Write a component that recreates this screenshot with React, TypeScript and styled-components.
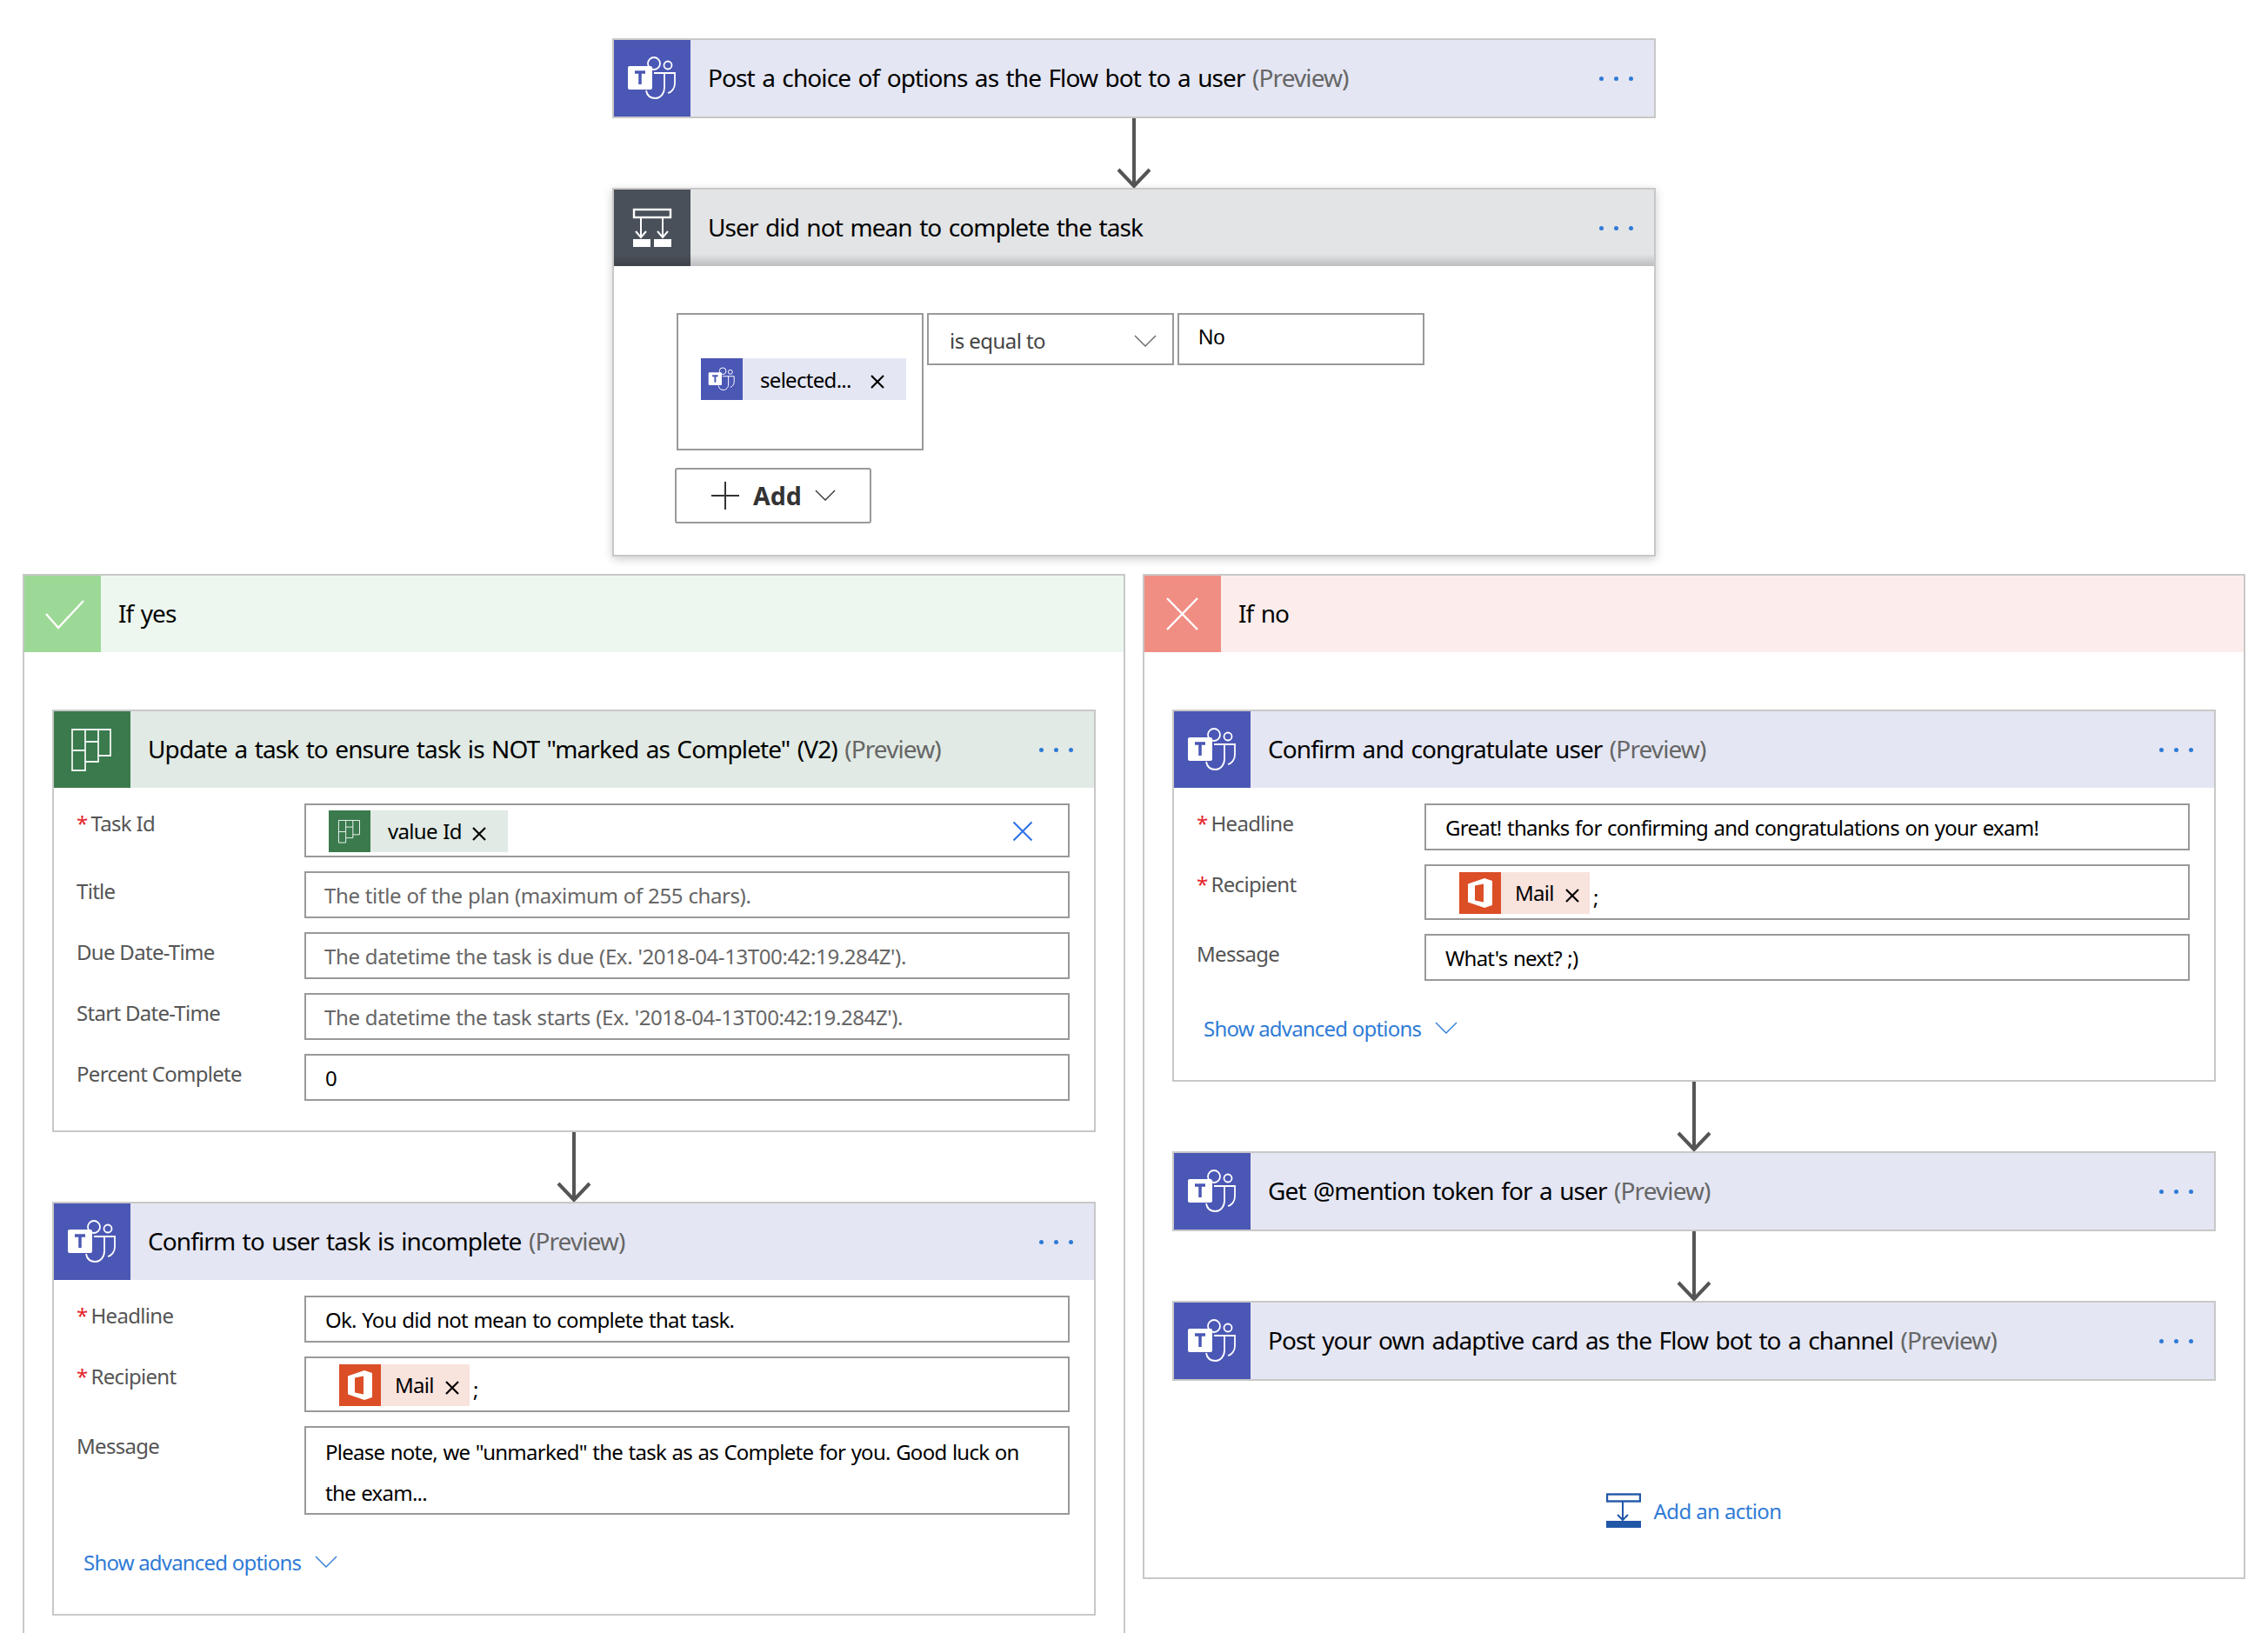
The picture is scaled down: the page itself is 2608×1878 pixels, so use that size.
import React from "react";
import styled, { createGlobalStyle } from "styled-components";

const GlobalStyle = createGlobalStyle`
  html, body {
    margin: 0;
    background: #fff;
    font-family: "Noto Sans", "Open Sans", sans-serif;
  }
`;

const palette = {
  teams: { tile: "#4b57b5", head: "#e4e6f3" },
  condition: { tile: "#4a5059", head: "#e3e4e6" },
  planner: { tile: "#3a7a4d", head: "#e1eae4" },
  office: { tile: "#dc4e26", head: "#f9e3dd" },
  yes: { tile: "#9dd996", head: "#edf7ef" },
  no: { tile: "#f08e84", head: "#fcedec" },
};
type Kind = keyof typeof palette;

/* ---------- icons ---------- */

const TeamsIcon = ({ size }: { size: number }) => (
  <svg width={size} height={size} viewBox="0 0 88 88" fill="none" stroke="#fff" strokeWidth="1.8">
    <circle cx="46" cy="27" r="7" />
    <circle cx="62" cy="29" r="4.5" />
    <path d="M46 38h24v12c0 6-4 10-8 11" />
    <path d="M58 38v17c0 7-5 12-10 12-6 0-10-3-11-9" />
    <rect x="16" y="30" width="28" height="27" rx="2" fill="#fff" stroke="none" />
    <path d="M24 37h12M30 37v14" stroke="#4b57b5" strokeWidth="3.5" />
  </svg>
);

const ConditionIcon = () => (
  <svg width="88" height="88" viewBox="0 0 88 88" fill="none" stroke="#fff" strokeWidth="2">
    <rect x="23" y="23" width="42" height="9" strokeWidth="2.4" />
    <path d="M31 32v23M25 48l6 7 6-7M56 32v23M50 48l6 7 6-7" />
    <path d="M22 57h20v9H22zM46 57h20v9H46z" fill="#fff" stroke="none" />
  </svg>
);

const PlannerIcon = ({ size }: { size: number }) => (
  <svg width={size} height={size} viewBox="0 0 88 88" fill="none" stroke="#fff" strokeWidth="1.8" opacity="0.92">
    <path d="M21 21h44v30H51v7H36v10H21z" />
    <path d="M36 21v37M51 21v30M21 45h15M36 35h15" />
  </svg>
);

const OfficeIcon = () => (
  <svg width="48" height="48" viewBox="0 0 48 48">
    <path
      fill="#fff"
      fillRule="evenodd"
      d="M10 13.5 29 7l9 3v28l-9 3-19-6.5zM18 15.5l10-2v21l-10-2z"
    />
  </svg>
);

const CheckIcon = () => (
  <svg width="88" height="88" viewBox="0 0 88 88" fill="none" stroke="#fff" strokeWidth="2.4">
    <path d="M25 44l14 16 29-31" />
  </svg>
);

const CrossIcon = () => (
  <svg width="88" height="88" viewBox="0 0 88 88" fill="none" stroke="#fff" strokeWidth="2.4">
    <path d="M26 26l35 36M61 26L26 62" />
  </svg>
);

const Chevron = ({ color, w = 26 }: { color: string; w?: number }) => (
  <svg width={w} height={w / 2 + 2} viewBox="0 0 26 15" fill="none" stroke={color} strokeWidth="1.4">
    <path d="M1 1l12 12L25 1" />
  </svg>
);

const CloseIcon = ({ size = 16, color = "#000", weight = 2.2 }: { size?: number; color?: string; weight?: number }) => (
  <svg width={size} height={size} viewBox="0 0 16 16" fill="none" stroke={color} strokeWidth={weight}>
    <path d="M1 1l14 14M15 1L1 15" />
  </svg>
);

const AddActionIcon = () => (
  <svg width="40" height="40" viewBox="0 0 40 40" fill="none" stroke="#2257a8" strokeWidth="2">
    <rect x="1" y="1.5" width="38" height="8" strokeWidth="2.4" />
    <path d="M19 9v22M13 25l6 6 6-6" />
    <rect x="0" y="32" width="40" height="8" fill="#2257a8" stroke="none" />
  </svg>
);

/* ---------- cards ---------- */

const Page = styled.div`
  width: 2608px;
  height: 1878px;
  overflow: hidden;
  padding-top: 44px;
  box-sizing: border-box;
  display: flex;
  flex-direction: column;
  align-items: center;
`;

const TopCard = styled.div`
  width: 1200px;
  box-sizing: border-box;
`;

const Card = styled.div<{ $raised?: boolean }>`
  border: 2px solid #c8c8c8;
  background: #fff;
  box-sizing: border-box;
  width: 100%;
  box-shadow: ${(p) => (p.$raised ? "0 3px 10px rgba(0, 0, 0, 0.2)" : "none")};
`;

const Head = styled.div<{ $kind: Kind; $shaded?: boolean }>`
  position: relative;
  display: flex;
  align-items: center;
  height: 88px;
  background: ${(p) => palette[p.$kind].head};

  &::after {
    content: "";
    display: ${(p) => (p.$shaded ? "block" : "none")};
    position: absolute;
    left: 0;
    right: 0;
    bottom: 0;
    height: 14px;
    background: linear-gradient(to bottom, rgba(0, 0, 0, 0), rgba(0, 0, 0, 0.17));
  }
`;

const Tile = styled.div<{ $kind: Kind; $size?: number }>`
  flex: none;
  width: ${(p) => p.$size ?? 88}px;
  height: ${(p) => p.$size ?? 88}px;
  display: flex;
  align-items: center;
  justify-content: center;
  background: ${(p) => palette[p.$kind].tile};
`;

const Title = styled.div`
  flex: 1;
  padding: 0 0 2px 20px;
  font-size: 28px;
  color: #000;
  white-space: nowrap;
  letter-spacing: -0.9px;
  word-spacing: 2px;

  span {
    color: #666;
  }
`;

const Dots = styled.div`
  display: flex;
  gap: 12px;
  margin-right: 24px;

  i {
    width: 5px;
    height: 5px;
    border-radius: 50%;
    background: #2f7ad6;
  }
`;

const Connector = styled.div`
  display: flex;
  justify-content: center;
  height: 80px;
`;

const Arrow = () => (
  <Connector>
    <svg width="44" height="80" viewBox="0 0 44 80" fill="none" stroke="#555" strokeWidth="4">
      <path d="M22 0v78M4 59l18 19 18-19" />
    </svg>
  </Connector>
);

/* ---------- condition ---------- */

const ConditionBody = styled.div`
  padding: 54px 0 0 72px;
  height: 332px;
  box-sizing: border-box;
`;

const ConditionRow = styled.div`
  display: flex;
  align-items: flex-start;
  gap: 4px;
`;

const ConditionLeft = styled.div`
  width: 284px;
  height: 158px;
  border: 2px solid #999;
  box-sizing: border-box;
  padding: 50px 0 0 26px;
`;

const ConditionSelect = styled.div`
  width: 284px;
  height: 60px;
  border: 2px solid #999;
  box-sizing: border-box;
  display: flex;
  align-items: center;
  justify-content: space-between;
  padding: 2px 18px 0 24px;
  font-size: 24px;
  color: #444;
  letter-spacing: -0.55px;

  svg {
    margin-top: 2px;
  }
`;

const ConditionValue = styled.div`
  width: 284px;
  height: 60px;
  border: 2px solid #999;
  box-sizing: border-box;
  display: flex;
  align-items: center;
  padding: 0 0 4px 22px;
  font-family: "Liberation Sans", Arial, sans-serif;
  font-size: 24px;
  color: #000;
`;

const AddButton = styled.div`
  margin: 20px 0 0 -2px;
  width: 226px;
  height: 64px;
  border: 2px solid #999;
  border-radius: 3px;
  box-sizing: border-box;
  display: flex;
  align-items: center;
  padding-left: 40px;
  font-size: 28.5px;
  font-weight: 700;
  color: #333;

  span {
    margin: 0 15px 0 16px;
  }
`;

const Plus = () => (
  <svg width="32" height="32" viewBox="0 0 32 32" fill="none" stroke="#333" strokeWidth="2">
    <path d="M16 0v32M0 16h32" />
  </svg>
);

/* ---------- fields ---------- */

const Fields = styled.div<{ $bottom?: number }>`
  display: flex;
  flex-direction: column;
  gap: 16px;
  padding: 18px 28px ${(p) => p.$bottom ?? 0}px 26px;
`;

const Row = styled.div`
  display: flex;
  align-items: flex-start;
`;

const Label = styled.div`
  width: 262px;
  flex: none;
  padding-top: 7px;
  font-size: 24px;
  line-height: 32px;
  color: #555;
  letter-spacing: -0.7px;

  b {
    color: #e5262b;
    font-weight: 400;
    margin-right: 4px;
  }
`;

const Input = styled.div<{ $h?: number; $muted?: boolean; $pad?: number }>`
  flex: 1;
  min-height: ${(p) => p.$h ?? 54}px;
  border: 2px solid #999;
  box-sizing: border-box;
  display: flex;
  align-items: center;
  padding: 1px 0 0 ${(p) => p.$pad ?? (p.$muted ? 21 : 22)}px;
  font-size: 24px;
  color: ${(p) => (p.$muted ? "#666" : "#000")};
  letter-spacing: ${(p) => (p.$muted ? "-0.4px" : "-0.75px")};
  word-spacing: ${(p) => (p.$muted ? "0.5px" : "1px")};
  white-space: nowrap;
`;

const TextArea = styled.div`
  flex: 1;
  border: 2px solid #999;
  box-sizing: border-box;
  padding: 4px 0 0 22px;
  height: 102px;
  font-size: 24px;
  line-height: 47px;
  color: #000;
  letter-spacing: -0.75px;
  word-spacing: 1px;
  white-space: nowrap;
`;

const Chip = styled.div<{ $kind: Kind; $w: number; $left: number; $right: number }>`
  flex: none;
  width: ${(p) => p.$w}px;
  height: 48px;
  display: flex;
  align-items: center;
  background: ${(p) => palette[p.$kind].head};
  font-size: 24px;
  color: #000;
  letter-spacing: -0.7px;

  > span {
    margin: 0 ${(p) => p.$right}px 0 ${(p) => p.$left}px;
    white-space: nowrap;
  }

  > svg {
    margin-top: 6px;
  }
`;

const ClearButton = styled.div`
  margin-left: auto;
  margin-right: 40px;
  display: flex;
`;

const Semi = styled.span`
  margin: 10px 0 0 4px;
`;

const AdvancedLink = styled.div`
  display: flex;
  align-items: center;
  gap: 16px;
  margin: 34px 0 0 34px;
  height: 40px;
  padding-bottom: 40px;
  font-size: 24px;
  color: #2f7bd6;
  letter-spacing: -0.8px;
`;

const Advanced = () => (
  <AdvancedLink>
    Show advanced options <Chevron color="#2f7bd6" />
  </AdvancedLink>
);

const MailChip = () => (
  <Chip $kind="office" $w={150} $left={16} $right={13}>
    <Tile $kind="office" $size={48}>
      <OfficeIcon />
    </Tile>
    <span>Mail</span>
    <CloseIcon />
  </Chip>
);

const Required = ({ children }: { children: React.ReactNode }) => (
  <Label>
    <b>*</b>
    {children}
  </Label>
);

/* ---------- branches ---------- */

const Branches = styled.div`
  display: flex;
  gap: 20px;
  margin-top: 20px;
  width: 2556px;
  align-items: flex-start;
`;

const Branch = styled.div<{ $open?: boolean }>`
  width: 1268px;
  box-sizing: border-box;
  border: 2px solid #c8c8c8;
  border-bottom-width: ${(p) => (p.$open ? 0 : "2px")};
  min-height: ${(p) => (p.$open ? "1300px" : "auto")};
`;

const BranchBody = styled.div`
  padding: 66px 32px 0;
`;

const AddAction = styled.div`
  display: flex;
  align-items: center;
  justify-content: center;
  gap: 14px;
  margin-top: 129px;
  padding-bottom: 57px;
  font-size: 24px;
  color: #2f7bd6;
  letter-spacing: -0.6px;
`;

const Header = ({ kind, title, preview }: { kind: Kind; title: string; preview?: boolean }) => (
  <Head $kind={kind}>
    <Tile $kind={kind}>{kind === "planner" ? <PlannerIcon size={88} /> : <TeamsIcon size={88} />}</Tile>
    <Title>
      {title} {preview && <span>(Preview)</span>}
    </Title>
    <Dots>
      <i />
      <i />
      <i />
    </Dots>
  </Head>
);

export default function App() {
  return (
    <Page>
      <GlobalStyle />
      <TopCard>
        <Card>
          <Header kind="teams" title="Post a choice of options as the Flow bot to a user" preview />
        </Card>
        <Arrow />
        <Card $raised>
          <Head $kind="condition" $shaded>
            <Tile $kind="condition">
              <ConditionIcon />
            </Tile>
            <Title>User did not mean to complete the task</Title>
            <Dots>
              <i />
              <i />
              <i />
            </Dots>
          </Head>
          <ConditionBody>
            <ConditionRow>
              <ConditionLeft>
                <Chip $kind="teams" $w={236} $left={20} $right={22}>
                  <Tile $kind="teams" $size={48}>
                    <TeamsIcon size={48} />
                  </Tile>
                  <span>selected...</span>
                  <CloseIcon />
                </Chip>
              </ConditionLeft>
              <ConditionSelect>
                is equal to <Chevron color="#666" />
              </ConditionSelect>
              <ConditionValue>No</ConditionValue>
            </ConditionRow>
            <AddButton>
              <Plus />
              <span>Add</span>
              <Chevron color="#333" w={24} />
            </AddButton>
          </ConditionBody>
        </Card>
      </TopCard>

      <Branches>
        <Branch $open>
          <Head $kind="yes">
            <Tile $kind="yes">
              <CheckIcon />
            </Tile>
            <Title>If yes</Title>
          </Head>
          <BranchBody>
            <Card>
              <Header kind="planner" title={'Update a task to ensure task is NOT "marked as Complete" (V2)'} preview />
              <Fields $bottom={34}>
                <Row>
                  <Required>Task Id</Required>
                  <Input $h={62} $pad={26}>
                    <Chip $kind="planner" $w={206} $left={20} $right={12}>
                      <Tile $kind="planner" $size={48}>
                        <PlannerIcon size={48} />
                      </Tile>
                      <span>value Id</span>
                      <CloseIcon />
                    </Chip>
                    <ClearButton>
                      <CloseIcon size={24} color="#2a6fe8" weight={1.3} />
                    </ClearButton>
                  </Input>
                </Row>
                <Row>
                  <Label>Title</Label>
                  <Input $muted>The title of the plan (maximum of 255 chars).</Input>
                </Row>
                <Row>
                  <Label>Due Date-Time</Label>
                  <Input $muted>The datetime the task is due (Ex. '2018-04-13T00:42:19.284Z').</Input>
                </Row>
                <Row>
                  <Label>Start Date-Time</Label>
                  <Input $muted>The datetime the task starts (Ex. '2018-04-13T00:42:19.284Z').</Input>
                </Row>
                <Row>
                  <Label>Percent Complete</Label>
                  <Input>0</Input>
                </Row>
              </Fields>
            </Card>
            <Arrow />
            <Card>
              <Header kind="teams" title="Confirm to user task is incomplete" preview />
              <Fields>
                <Row>
                  <Required>Headline</Required>
                  <Input>Ok. You did not mean to complete that task.</Input>
                </Row>
                <Row>
                  <Required>Recipient</Required>
                  <Input $h={64} $pad={38}>
                    <MailChip />
                    <Semi>;</Semi>
                  </Input>
                </Row>
                <Row>
                  <Label>Message</Label>
                  <TextArea>
                    Please note, we "unmarked" the task as as Complete for you. Good luck on
                    <br />
                    the exam...
                  </TextArea>
                </Row>
              </Fields>
              <Advanced />
            </Card>
          </BranchBody>
        </Branch>

        <Branch>
          <Head $kind="no">
            <Tile $kind="no">
              <CrossIcon />
            </Tile>
            <Title>If no</Title>
          </Head>
          <BranchBody>
            <Card>
              <Header kind="teams" title="Confirm and congratulate user" preview />
              <Fields>
                <Row>
                  <Required>Headline</Required>
                  <Input>Great! thanks for confirming and congratulations on your exam!</Input>
                </Row>
                <Row>
                  <Required>Recipient</Required>
                  <Input $h={64} $pad={38}>
                    <MailChip />
                    <Semi>;</Semi>
                  </Input>
                </Row>
                <Row>
                  <Label>Message</Label>
                  <Input>What's next? ;)</Input>
                </Row>
              </Fields>
              <Advanced />
            </Card>
            <Arrow />
            <Card>
              <Header kind="teams" title="Get @mention token for a user" preview />
            </Card>
            <Arrow />
            <Card>
              <Header kind="teams" title="Post your own adaptive card as the Flow bot to a channel" preview />
            </Card>
            <AddAction>
              <AddActionIcon />
              Add an action
            </AddAction>
          </BranchBody>
        </Branch>
      </Branches>
    </Page>
  );
}
